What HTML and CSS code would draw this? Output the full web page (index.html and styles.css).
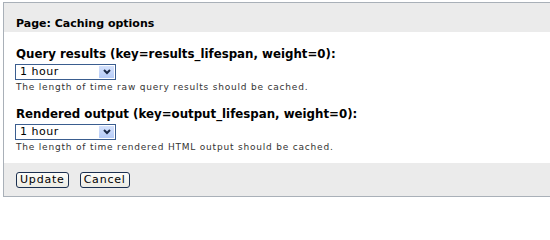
FILE: index.html
```html
<!DOCTYPE html>
<html>
<head>
<meta charset="utf-8">
<link rel="stylesheet" href="styles.css">
</head>
<body>
<form class="panel">
  <div class="panel-head">Page: Caching options</div>
  <div class="panel-body">
    <div class="field">
      <div class="label">Query results (key=results_lifespan, weight=0):</div>
      <div class="select"><span class="select-value">1 hour</span><span class="select-btn"><svg width="8" height="6" viewBox="0 0 8 6"><path d="M1 1 L4 4 L7 1" fill="none" stroke="#1c2a47" stroke-width="2"/></svg></span></div>
      <div class="desc">The length of time raw query results should be cached.</div>
    </div>
    <div class="field">
      <div class="label">Rendered output (key=output_lifespan, weight=0):</div>
      <div class="select"><span class="select-value">1 hour</span><span class="select-btn"><svg width="8" height="6" viewBox="0 0 8 6"><path d="M1 1 L4 4 L7 1" fill="none" stroke="#1c2a47" stroke-width="2"/></svg></span></div>
      <div class="desc">The length of time rendered HTML output should be cached.</div>
    </div>
  </div>
  <div class="panel-foot">
    <button type="button" class="btn">Update</button>
    <button type="button" class="btn">Cancel</button>
  </div>
</form>
</body>
</html>
```

FILE: styles.css
```css
html, body {
  margin: 0;
  padding: 0;
  background: #ffffff;
}
body {
  padding: 2px 0 0 3px;
  font-family: "DejaVu Sans", Verdana, sans-serif;
  color: #000;
}
.panel {
  margin: 0;
  width: 560px;
  border: 1px solid #a9b0b8;
  border-right: none;
  background: #fff;
}
.panel-head {
  background: #ebebeb;
  height: 29px;
  box-sizing: border-box;
  padding: 14px 0 0 12px;
  font-size: 11px;
  font-weight: bold;
  line-height: 13px;
}
.panel-body {
  padding: 15px 0 10px 12px;
}
.field + .field {
  margin-top: 14px;
}
.label {
  font-size: 11.8px;
  font-weight: bold;
  line-height: 14px;
  height: 14px;
  margin-bottom: 3px;
}
.select {
  display: flex;
  width: 101px;
  height: 16px;
  box-sizing: border-box;
  border: 1px solid #3a5d8f;
  margin-left: -1px;
  background: #fff;
}
.select-value {
  flex: 1;
  font-size: 11px;
  line-height: 14px;
  letter-spacing: 0.5px;
  padding-left: 4px;
}
.select-btn {
  width: 15px;
  margin: 1px;
  background: linear-gradient(#d4e1fc, #b5cbf7);
  display: flex;
  align-items: center;
  justify-content: center;
}
.desc {
  margin-top: 2px;
  font-size: 9px;
  line-height: 11px;
  letter-spacing: 0.8px;
  color: #333;
}
.panel-foot {
  background: #ebebeb;
  height: 33px;
  box-sizing: border-box;
  padding: 9px 0 0 12px;
  display: flex;
  gap: 11px;
  align-items: flex-start;
}
.btn {
  font-family: "DejaVu Sans", Verdana, sans-serif;
  font-size: 11px;
  line-height: 12px;
  letter-spacing: 0.8px;
  height: 16px;
  padding: 0 3px;
  border: 1px solid #1c3050;
  border-radius: 3px;
  background: linear-gradient(#fcfcf9, #ecebe4);
  color: #000;
}
```
